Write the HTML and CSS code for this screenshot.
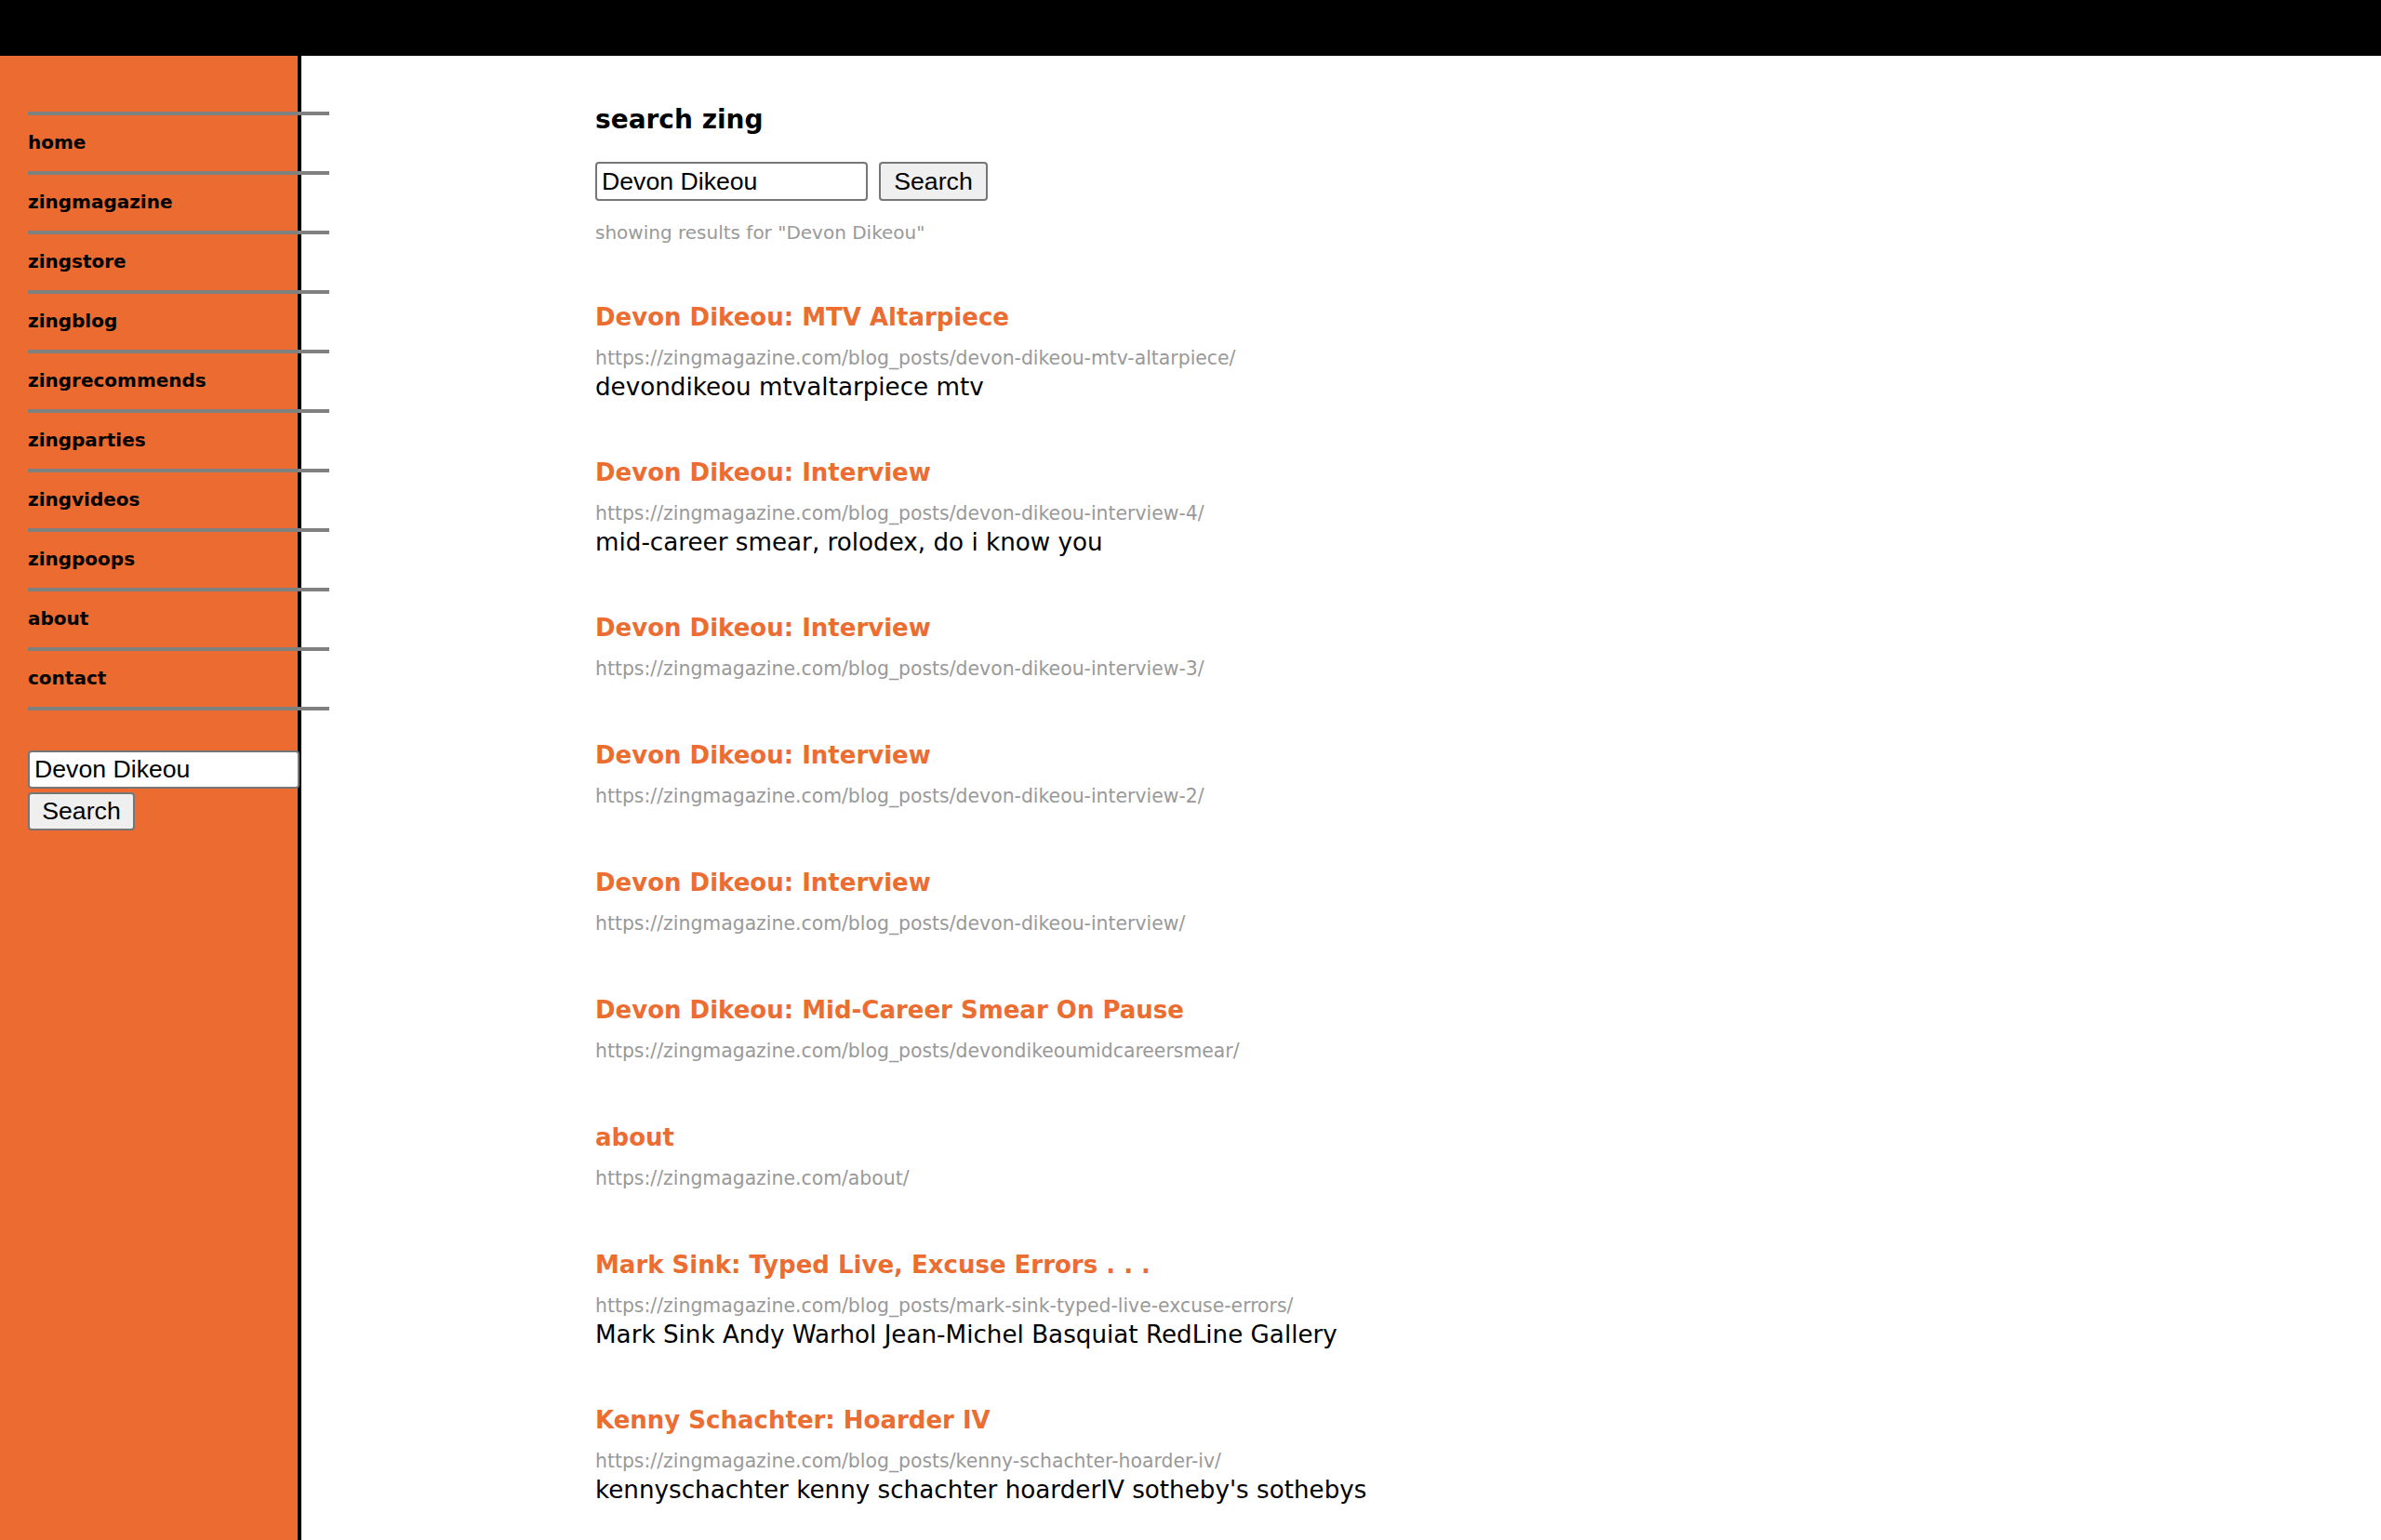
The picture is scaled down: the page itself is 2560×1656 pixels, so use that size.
FILE: index.html
```html
<!DOCTYPE html>
<html lang="en">
<head>
<meta charset="utf-8">
<title>search zing</title>
<link rel="stylesheet" href="styles.css">
</head>
<body>
<header class="topbar"></header>
<div class="layout">
  <aside class="sidebar">
    <ul class="nav">
      <li><a href="#">home</a></li>
      <li><a href="#">zingmagazine</a></li>
      <li><a href="#">zingstore</a></li>
      <li><a href="#">zingblog</a></li>
      <li><a href="#">zingrecommends</a></li>
      <li><a href="#">zingparties</a></li>
      <li><a href="#">zingvideos</a></li>
      <li><a href="#">zingpoops</a></li>
      <li><a href="#">about</a></li>
      <li><a href="#">contact</a></li>
    </ul>
    <form class="side-search">
      <input class="side-input" type="text" value="Devon Dikeou">
      <button class="side-btn" type="button">Search</button>
    </form>
  </aside>
  <main class="main">
    <h2 class="page-title">search zing</h2>
    <form class="search-form">
      <input class="search-input" type="text" value="Devon Dikeou">
      <button class="search-btn" type="button">Search</button>
    </form>
    <p class="showing">showing results for "Devon Dikeou"</p>
    <div class="results">
      <div class="result">
        <a class="result-title" href="#">Devon Dikeou: MTV Altarpiece</a>
        <div class="result-url">https://zingmagazine.com/blog_posts/devon-dikeou-mtv-altarpiece/</div>
        <div class="result-desc">devondikeou mtvaltarpiece mtv</div>
      </div>
      <div class="result">
        <a class="result-title" href="#">Devon Dikeou: Interview</a>
        <div class="result-url">https://zingmagazine.com/blog_posts/devon-dikeou-interview-4/</div>
        <div class="result-desc">mid-career smear, rolodex, do i know you</div>
      </div>
      <div class="result">
        <a class="result-title" href="#">Devon Dikeou: Interview</a>
        <div class="result-url">https://zingmagazine.com/blog_posts/devon-dikeou-interview-3/</div>
      </div>
      <div class="result">
        <a class="result-title" href="#">Devon Dikeou: Interview</a>
        <div class="result-url">https://zingmagazine.com/blog_posts/devon-dikeou-interview-2/</div>
      </div>
      <div class="result">
        <a class="result-title" href="#">Devon Dikeou: Interview</a>
        <div class="result-url">https://zingmagazine.com/blog_posts/devon-dikeou-interview/</div>
      </div>
      <div class="result">
        <a class="result-title" href="#">Devon Dikeou: Mid-Career Smear On Pause</a>
        <div class="result-url">https://zingmagazine.com/blog_posts/devondikeoumidcareersmear/</div>
      </div>
      <div class="result">
        <a class="result-title" href="#">about</a>
        <div class="result-url">https://zingmagazine.com/about/</div>
      </div>
      <div class="result">
        <a class="result-title" href="#">Mark Sink: Typed Live, Excuse Errors . . .</a>
        <div class="result-url">https://zingmagazine.com/blog_posts/mark-sink-typed-live-excuse-errors/</div>
        <div class="result-desc">Mark Sink Andy Warhol Jean-Michel Basquiat RedLine Gallery</div>
      </div>
      <div class="result">
        <a class="result-title" href="#">Kenny Schachter: Hoarder IV</a>
        <div class="result-url">https://zingmagazine.com/blog_posts/kenny-schachter-hoarder-iv/</div>
        <div class="result-desc">kennyschachter kenny schachter hoarderIV sotheby's sothebys</div>
      </div>
    </div>
  </main>
</div>
</body>
</html>
```

FILE: styles.css
```css
* { box-sizing: border-box; }

html, body {
  margin: 0;
  padding: 0;
  background: #ffffff;
  font-family: "DejaVu Sans", Verdana, sans-serif;
  color: #000;
}

.topbar {
  height: 60px;
  background: #000;
}

.layout {
  display: flex;
  align-items: stretch;
  min-height: calc(100vh - 60px);
}

.sidebar {
  flex: 0 0 324px;
  width: 324px;
  background: #eb6b30;
  border-right: 4px solid #000;
  padding-top: 60px;
}

.nav {
  list-style: none;
  margin: 0 0 0 30px;
  padding: 0;
  width: 324px;
  border-top: 4px solid #808080;
  position: relative;
  z-index: 1;
}

.nav li {
  height: 64px;
  border-bottom: 4px solid #808080;
}

.nav a {
  display: block;
  line-height: 58px;
  padding-bottom: 2px;
  font-size: 20px;
  font-weight: bold;
  color: #000;
  text-decoration: none;
}

.side-search {
  margin: 43px 0 0 30px;
  display: flex;
  flex-direction: column;
  align-items: flex-start;
  gap: 4px;
  position: relative;
  z-index: 1;
}

.side-input,
.search-input {
  font-family: "Liberation Sans", Arial, sans-serif;
  font-size: 26.67px;
  color: #000;
  background: #fff;
  border: 2px solid #767676;
  border-radius: 4px;
  padding: 0 4px 0 5px;
  margin: 0;
}

.side-input {
  width: 292px;
  height: 41px;
}

.side-btn,
.search-btn {
  font-family: "Liberation Sans", Arial, sans-serif;
  font-size: 26.67px;
  color: #000;
  background: #efefef;
  border: 2px solid #767676;
  border-radius: 4px;
  padding: 0;
  margin: 0;
}

.side-btn {
  width: 115px;
  height: 41px;
}

.main {
  flex: 1;
  padding: 52px 0 0 316px;
}

.page-title {
  margin: 0;
  font-size: 28px;
  line-height: 34px;
  font-weight: bold;
}

.search-form {
  margin-top: 28px;
  display: flex;
  gap: 12px;
}

.search-input {
  width: 293px;
  height: 42px;
}

.search-btn {
  width: 117px;
  height: 42px;
}

.showing {
  margin: 22px 0 0;
  font-size: 20px;
  line-height: 24px;
  color: #999;
}

.results {
  margin-top: 63px;
  display: flex;
  flex-direction: column;
  gap: 61px;
}

.result {
  display: flex;
  flex-direction: column;
  align-items: flex-start;
}

.result-title {
  font-size: 26px;
  line-height: 32px;
  font-weight: bold;
  color: #ec6d31;
  text-decoration: none;
}

.result-url {
  margin: 18px 0 6px;
  font-size: 20.4px;
  line-height: 20px;
  color: #999;
}

.result-desc {
  font-size: 26.2px;
  line-height: 30px;
  color: #000;
}
```
